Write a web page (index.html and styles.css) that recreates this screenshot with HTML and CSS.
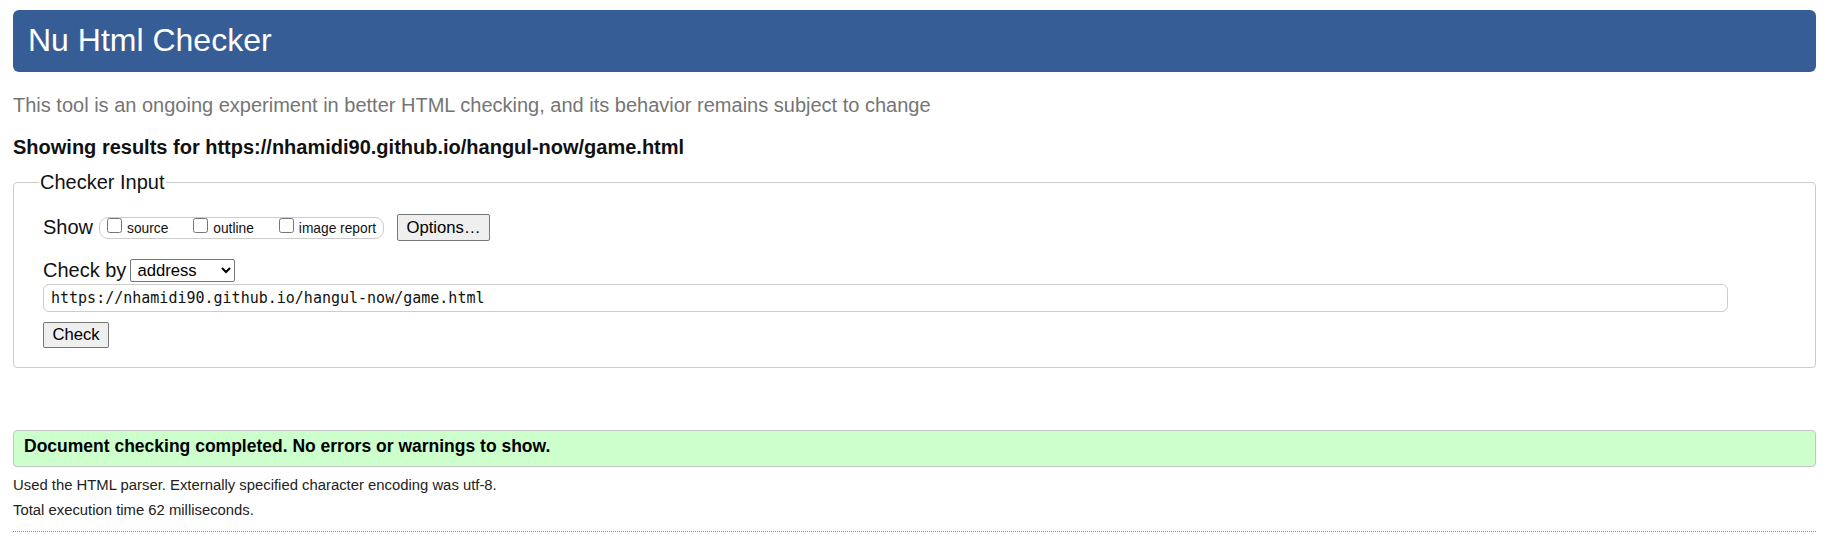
FILE: index.html
```html
<!DOCTYPE html>
<html lang="en">
<head>
<meta charset="utf-8">
<title>Nu Html Checker</title>
<link rel="stylesheet" href="styles.css">
</head>
<body>
<div class="page">
  <h1 class="masthead">Nu Html Checker</h1>
  <p class="intro">This tool is an ongoing experiment in better HTML checking, and its behavior remains subject to change</p>
  <p class="results-for">Showing results for https://nhamidi90.github.io/hangul-now/game.html</p>
  <form class="checker-form">
    <fieldset class="checker">
      <legend class="checker-legend">Checker Input</legend>
      <div class="row show-row">
        <span class="row-label">Show</span>
        <div class="pill">
          <label class="opt"><input type="checkbox" class="cb"><span class="opt-text">source</span></label>
          <label class="opt"><input type="checkbox" class="cb"><span class="opt-text">outline</span></label>
          <label class="opt"><input type="checkbox" class="cb"><span class="opt-text">image report</span></label>
        </div>
        <button type="button" class="btn btn-options">Options…</button>
      </div>
      <div class="row by-row">
        <label class="row-label by-label">Check by</label>
        <select class="by-select">
          <option>address</option>
          <option>file upload</option>
          <option>text input</option>
        </select>
      </div>
      <input class="url" type="text" value="https://nhamidi90.github.io/hangul-now/game.html">
      <div class="submit-row"><button type="button" class="btn btn-check">Check</button></div>
    </fieldset>
  </form>
  <p class="success">Document checking completed. No errors or warnings to show.</p>
  <p class="meta">Used the HTML parser. Externally specified character encoding was utf-8.</p>
  <p class="meta meta-second">Total execution time 62 milliseconds.</p>
  <hr class="dotted">
</div>
</body>
</html>
```
FILE: styles.css
```css
html, body {
  margin: 0;
  padding: 0;
  background: #ffffff;
}

body {
  font-family: "Liberation Sans", Arial, sans-serif;
  color: #000000;
}

.page {
  padding: 10px 10px 0 13px;
}

.masthead {
  margin: 0;
  background: #365d95;
  color: #ffffff;
  font-size: 32px;
  font-weight: normal;
  line-height: 36px;
  padding: 12px 15px 14px;
  border-radius: 6px;
}

.intro {
  margin: 22px 0 0;
  font-size: 20px;
  line-height: 23px;
  color: #757575;
}

.results-for {
  margin: 19px 0 0;
  font-size: 20px;
  line-height: 23px;
  font-weight: bold;
  color: #111111;
}

.checker-form {
  margin: 12px 0 0;
}

.checker {
  margin: 0;
  border: 1px solid #cccccc;
  border-radius: 4px;
  padding: 20px 29px 19px;
  min-width: 0;
}

.checker-legend {
  font-size: 20px;
  line-height: 23px;
  padding: 0 1px;
  margin-left: -4px;
  color: #111111;
}

.row {
  display: flex;
  align-items: center;
}

.show-row {
  height: 27px;
}

.row-label {
  font-size: 20px;
  line-height: 23px;
  color: #111111;
}

.pill {
  display: flex;
  align-items: flex-start;
  height: 20px;
  margin-left: 6px;
  padding: 0 7px;
  border: 1px solid #cccccc;
  border-radius: 9px;
}

.opt {
  display: flex;
  align-items: flex-start;
  margin-right: 25px;
}

.opt:last-child {
  margin-right: 0;
}

.cb {
  width: 15px;
  height: 15px;
  margin: 0 5px 0 0;
}

.opt-text {
  font-size: 13.75px;
  line-height: 17px;
  padding-top: 2px;
  color: #111111;
}

.btn {
  font-family: "Liberation Sans", Arial, sans-serif;
  font-size: 16.67px;
  color: #000000;
  background: #efefef;
  border: 1px solid #767676;
  border-radius: 2px;
  margin: 0;
}

.btn-options {
  margin-left: 13px;
  height: 27px;
  width: 93px;
  padding: 0;
}

.by-row {
  margin-top: 18px;
  height: 23px;
}

.by-select {
  margin-left: 4px;
  width: 105px;
  height: 23px;
  font-family: "Liberation Sans", Arial, sans-serif;
  font-size: 16.67px;
  color: #000000;
  border: 1px solid #767676;
  border-radius: 2px;
  background: #ffffff;
  padding: 0 2px;
}

.url {
  display: block;
  box-sizing: border-box;
  margin: 2px 0 0;
  width: 1685px;
  height: 28px;
  padding: 0 7px;
  border: 1px solid #cccccc;
  border-radius: 6px;
  font-family: "DejaVu Sans Mono", "Liberation Mono", monospace;
  font-size: 15px;
  color: #111111;
  background: #ffffff;
}

.submit-row {
  margin-top: 10px;
  display: flex;
}

.btn-check {
  height: 26px;
  width: 66px;
  padding: 0;
}

.success {
  margin: 62px 0 0;
  background: #ccffcc;
  border: 1px solid #c4c4c4;
  border-radius: 4px;
  padding: 5px 10px 10px;
  font-size: 17.5px;
  line-height: 20px;
  font-weight: bold;
  color: #000000;
}

.meta {
  margin: 10px 0 0;
  font-size: 14.85px;
  line-height: 17px;
  color: #222222;
}

.meta-second {
  margin-top: 8px;
}

.dotted {
  margin: 12px 0 0;
  border: 0;
  border-top: 1px dotted #8a8a8a;
  height: 0;
}
```
